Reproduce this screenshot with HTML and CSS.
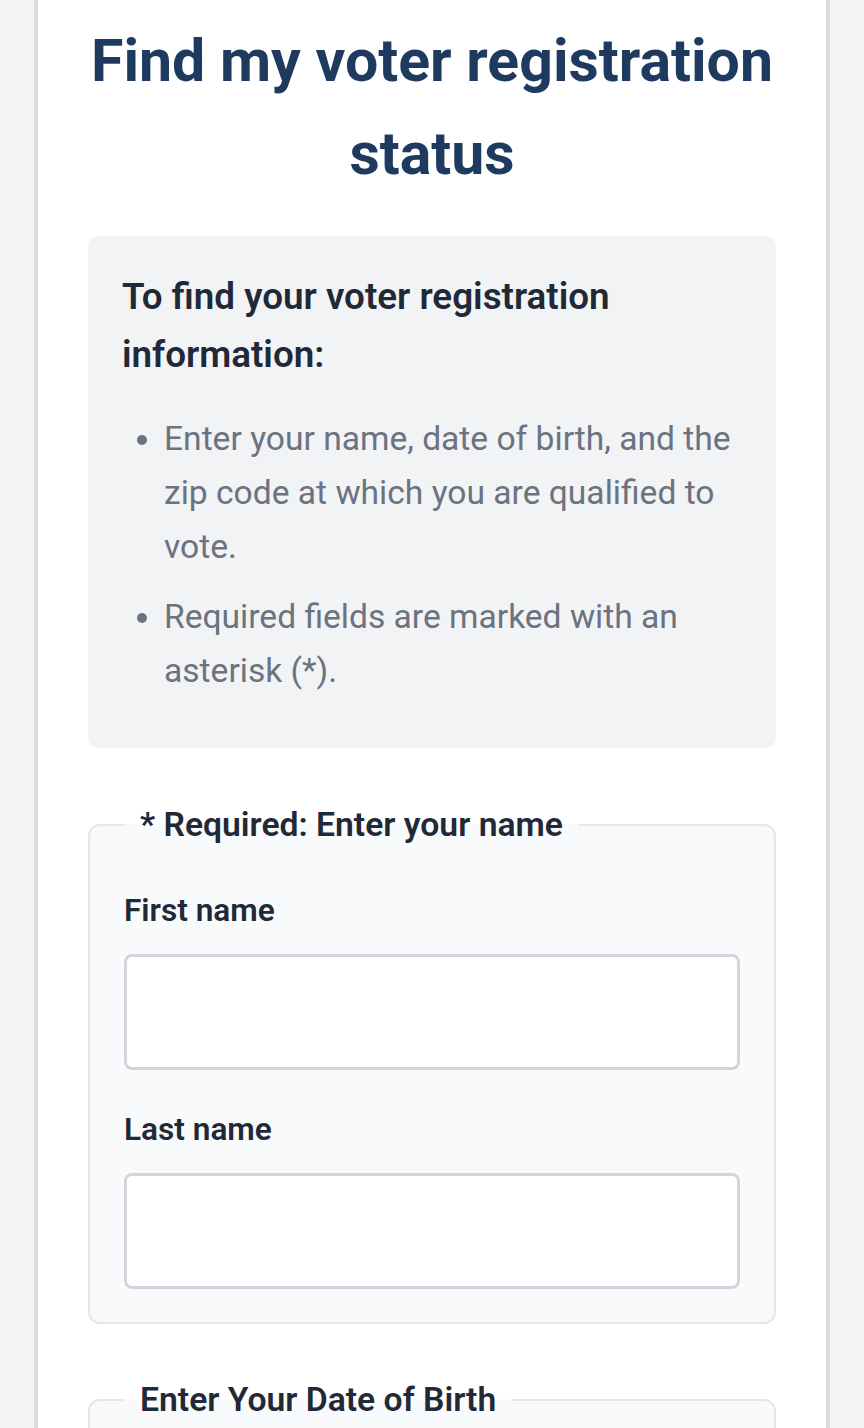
FILE: index.html
```html
<!DOCTYPE html>
<html lang="en">
<head>
<meta charset="utf-8">
<title>Find my voter registration status</title>
<link rel="stylesheet" href="styles.css">
</head>
<body>
<main class="card">
  <h1 class="title">Find my voter registration status</h1>
  <section class="info">
    <h2 class="info-heading">To find your voter registration information:</h2>
    <ul class="info-list">
      <li>Enter your name, date of birth, and the zip code at which you are qualified to vote.</li>
      <li>Required fields are marked with an asterisk (*).</li>
    </ul>
  </section>
  <form class="form">
    <fieldset class="group">
      <legend class="group-legend">* Required: Enter your name</legend>
      <label class="field-label" for="first">First name</label>
      <input class="field-input" id="first" type="text">
      <label class="field-label" for="last">Last name</label>
      <input class="field-input" id="last" type="text">
    </fieldset>
    <fieldset class="group">
      <legend class="group-legend">Enter Your Date of Birth</legend>
      <label class="field-label" for="dob">Date of birth</label>
      <input class="field-input" id="dob" type="text">
    </fieldset>
  </form>
</main>
</body>
</html>
```

FILE: styles.css
```css
html, body {
  margin: 0;
  padding: 0;
}
body {
  background: #f3f4f6;
  font-family: Roboto, "Noto Sans", "Liberation Sans", sans-serif;
  color: #1f2937;
  overflow: hidden;
}
.card {
  box-sizing: border-box;
  width: 796px;
  margin: 0 auto;
  background: #ffffff;
  border-left: 4px solid #d9dce1;
  border-right: 4px solid #d9dce1;
  padding: 14px 50px 40px;
  min-height: 1428px;
}
.title {
  margin: 0;
  font-size: 59px;
  line-height: 93px;
  font-weight: 700;
  color: #1e3a5f;
  text-align: center;
}
.info {
  margin-top: 36px;
  background: #f2f3f5;
  border-radius: 10px;
  padding: 32px 34px 34px;
}
.info-heading {
  margin: 0;
  font-size: 36.8px;
  line-height: 58px;
  font-weight: 600;
  color: #1f2937;
}
.info-list {
  margin: 28px 0 0;
  padding: 0 0 0 42px;
  color: #6b7280;
  font-size: 33.6px;
  line-height: 54px;
}
.info-list li {
  margin-bottom: 16px;
}
.form {
  margin-top: 54px;
}
.group {
  margin: 0 0 53px;
  padding: 41px 34px 33px;
  border: 2px solid #e5e7eb;
  border-radius: 12px;
  background: #f9fafb;
  min-width: 0;
}
.group-legend {
  padding: 0 16px;
  font-size: 33.7px;
  line-height: 45px;
  font-weight: 600;
  color: #1f2937;
}
.field-label {
  display: block;
  font-size: 31.6px;
  line-height: 45px;
  font-weight: 600;
  color: #1f2937;
}
.field-input {
  display: block;
  box-sizing: border-box;
  width: 100%;
  height: 116px;
  margin: 21px 0 37px;
  border: 3px solid #d1d5db;
  border-radius: 8px;
  background: #ffffff;
  font: inherit;
}
.field-input:last-child {
  margin-bottom: 0;
}
```
